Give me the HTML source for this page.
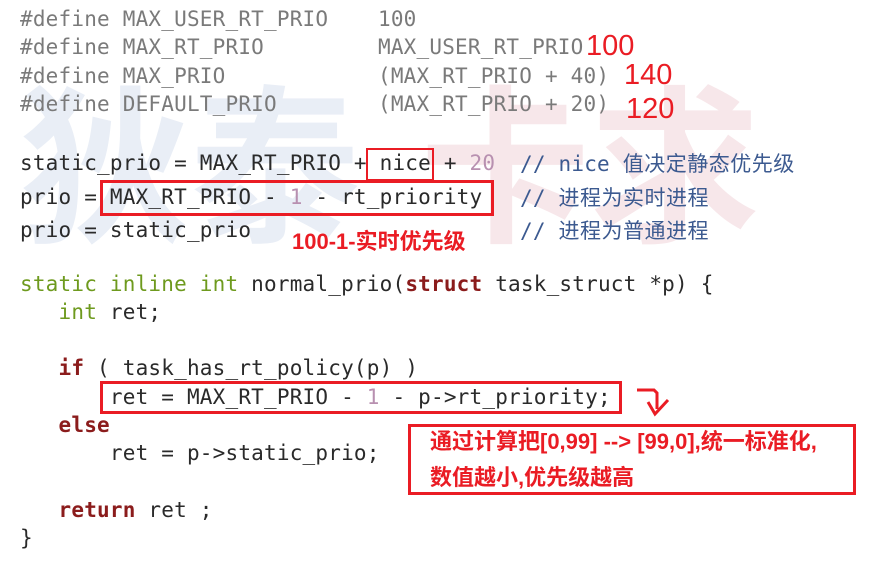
<!DOCTYPE html>
<html><head><meta charset="utf-8"><style>
body{margin:0;width:871px;height:571px;background:#fff;position:relative;overflow:hidden;font-family:"DejaVu Sans Mono","Liberation Mono","Noto Sans CJK SC",monospace;}
.l{position:absolute;font-size:21px;white-space:pre;line-height:28px;color:#2a2a2a;letter-spacing:0.2px}
.d{color:#7a7a7a}
.k{color:#6e9a1e}
.r{color:#8b1c1c;font-weight:bold}
.c{color:#3c5a90}
.n{color:#b890b0}
.cj{font-family:"Noto Sans CJK SC",sans-serif;letter-spacing:0.5px}
.red{position:absolute;color:#ea1c24;font-family:"Liberation Sans","Noto Sans CJK SC",sans-serif;white-space:pre}
.box{position:absolute;border:3px solid #ea1c24;box-sizing:border-box}
.wm{position:absolute;font-family:"Noto Sans CJK SC",sans-serif;font-size:170px;font-weight:bold;line-height:1}
</style></head><body>
<div class="wm" style="left:20px;top:70px;color:#e9eef6">狄泰</div>
<div class="wm" style="left:420px;top:70px;color:#f7e7ea">卡求</div>

<div class="l d" style="left:20px;top:5px">#define MAX_USER_RT_PRIO</div><div class="l d" style="left:378px;top:5px">100</div>
<div class="l d" style="left:20px;top:33px">#define MAX_RT_PRIO</div><div class="l d" style="left:378px;top:33px">MAX_USER_RT_PRIO</div>
<div class="l d" style="left:20px;top:62px">#define MAX_PRIO</div><div class="l d" style="left:378px;top:62px">(MAX_RT_PRIO + 40)</div>
<div class="l d" style="left:20px;top:90px">#define DEFAULT_PRIO</div><div class="l d" style="left:378px;top:90px">(MAX_RT_PRIO + 20)</div>
<div class="red" style="left:586px;top:30px;font-size:29px">100</div>
<div class="red" style="left:624px;top:59px;font-size:29px">140</div>
<div class="red" style="left:626px;top:93px;font-size:29px">120</div>

<div class="l" style="left:20px;top:149px">static_prio = MAX_RT_PRIO + nice + <span class="n">20</span></div>
<div class="l c" style="left:520px;top:149px">// nice <span class="cj">值决定静态优先级</span></div>
<div class="l" style="left:20px;top:183px">prio = MAX_RT_PRIO - <span class="n">1</span> - rt_priority</div>
<div class="l c" style="left:520px;top:183px">// <span class="cj">进程为实时进程</span></div>
<div class="l" style="left:20px;top:216px">prio = static_prio</div>
<div class="l c" style="left:520px;top:216px">// <span class="cj">进程为普通进程</span></div>
<div class="box" style="left:366px;top:148px;width:68px;height:33px;border-width:2px"></div>
<div class="box" style="left:100px;top:180px;width:394px;height:36px"></div>
<div class="red" style="left:292px;top:224px;font-size:22px;font-weight:bold">100-1-实时优先级</div>

<div class="l" style="left:20px;top:270px"><span class="k">static inline int</span> normal_prio(<span class="r">struct</span> task_struct *p) {</div>
<div class="l" style="left:20px;top:298px">   <span class="k">int</span> ret;</div>
<div class="l" style="left:20px;top:354px">   <span class="r">if</span> ( task_has_rt_policy(p) )</div>
<div class="l" style="left:20px;top:383px">       ret = MAX_RT_PRIO - <span class="n">1</span> - p-&gt;rt_priority;</div>
<div class="l" style="left:20px;top:411px">   <span class="r">else</span></div>
<div class="l" style="left:20px;top:439px">       ret = p-&gt;static_prio;</div>
<div class="l" style="left:20px;top:496px">   <span class="r">return</span> ret ;</div>
<div class="l" style="left:20px;top:524px">}</div>
<div class="box" style="left:100px;top:381px;width:522px;height:33px"></div>
<svg style="position:absolute;left:630px;top:385px" width="55" height="35"><path d="M7 5 H24 L27 8 V24 M18 17 L25 29 L38 15" fill="none" stroke="#ea1c24" stroke-width="3"/></svg>
<div class="box" style="left:408px;top:424px;width:448px;height:71px"></div>
<div class="red" style="left:430px;top:424px;font-size:22px;font-weight:bold;line-height:36px">通过计算把[0,99] --&gt; [99,0],统一标准化,<br>数值越小,优先级越高</div>
</body></html>
